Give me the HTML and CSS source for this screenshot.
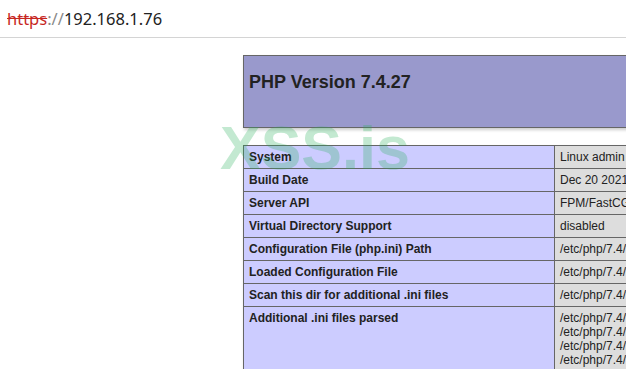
FILE: index.html
```html
<!DOCTYPE html>
<html lang="en">
<head>
    <meta charset="UTF-8">
    <title>PHP 7.4.27 - phpinfo()</title>
    <link rel="stylesheet" href="styles.css">
</head>
<body>

    <!-- Address bar -->
    <div class="address-bar">
        <span class="scheme">https</span><span class="sep">://</span><span class="host">192.168.1.76</span>
    </div>

    <!-- phpinfo output -->
    <div class="center">
        <table class="head-table">
            <tr class="h">
                <td><h1 class="p">PHP Version 7.4.27</h1></td>
            </tr>
        </table>

        <table class="info-table">
            <tr><td class="e">System </td><td class="v">Linux admin 5.4.0-91-generic #102-Ubuntu SMP x86_64 </td></tr>
            <tr><td class="e">Build Date </td><td class="v">Dec 20 2021 21:28:15 </td></tr>
            <tr><td class="e">Server API </td><td class="v">FPM/FastCGI </td></tr>
            <tr><td class="e">Virtual Directory Support </td><td class="v">disabled </td></tr>
            <tr><td class="e">Configuration File (php.ini) Path </td><td class="v">/etc/php/7.4/fpm </td></tr>
            <tr><td class="e">Loaded Configuration File </td><td class="v">/etc/php/7.4/fpm/php.ini </td></tr>
            <tr><td class="e">Scan this dir for additional .ini files </td><td class="v">/etc/php/7.4/fpm/conf.d </td></tr>
            <tr><td class="e">Additional .ini files parsed </td><td class="v">/etc/php/7.4/fpm/conf.d/10-mysqlnd.ini,<br>/etc/php/7.4/fpm/conf.d/10-opcache.ini,<br>/etc/php/7.4/fpm/conf.d/10-pdo.ini,<br>/etc/php/7.4/fpm/conf.d/15-xml.ini,<br>/etc/php/7.4/fpm/conf.d/20-calendar.ini </td></tr>
        </table>
    </div>

    <!-- Watermark -->
    <div class="watermark">XSS.is</div>

</body>
</html>
```

FILE: styles.css
```css
/* Global */
html, body {
    margin: 0;
    padding: 0;
    overflow: hidden;
    height: 100%;
}

body {
    background-color: #fff;
    color: #222;
    font-family: 'Liberation Sans', Arial, sans-serif;
    position: relative;
}

/* Address bar */
.address-bar {
    height: 37px;
    border-bottom: 1px solid #d4d4d4;
    display: flex;
    align-items: center;
    padding-left: 7px;
    font-family: 'Noto Sans', sans-serif;
    font-size: 16.5px;
    background-color: #fff;
}

.scheme {
    color: #c7271f;
    text-decoration: line-through;
}

.sep {
    color: #8a8a8a;
}

.host {
    color: #222;
}

/* phpinfo */
.center {
    padding-left: 243px;
    padding-top: 17px;
}

.center table {
    border-collapse: collapse;
    border: 0;
    width: 934px;
    box-shadow: 1px 2px 3px #ccc;
    text-align: left;
}

.head-table {
    margin-bottom: 17px;
}

td {
    border: 1px solid #666;
    font-size: 12px;
    vertical-align: baseline;
    padding: 4px 5px;
}

.h td {
    height: 63px;
    background-color: #99c;
    font-weight: bold;
    vertical-align: top;
}

h1.p {
    font-size: 18px;
    margin: 12px 0 0;
}

.e {
    background-color: #ccf;
    width: 300px;
    font-weight: bold;
}

.v {
    background-color: #ddd;
    max-width: 300px;
    word-wrap: break-word;
}

/* Watermark over the page */
.watermark {
    position: absolute;
    left: 220px;
    top: 113px;
    font-family: 'Liberation Sans', Arial, sans-serif;
    font-weight: bold;
    font-size: 61px;
    color: rgba(40, 175, 90, 0.28);
    pointer-events: none;
}
```
